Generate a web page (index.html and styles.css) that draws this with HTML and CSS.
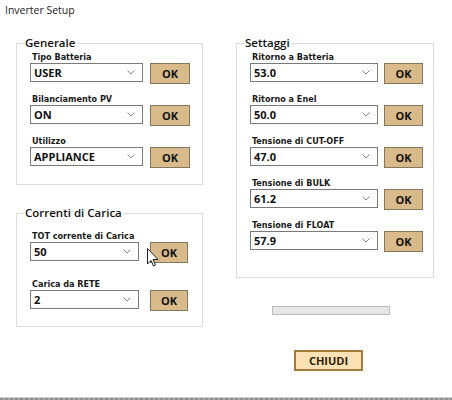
FILE: index.html
```html
<!DOCTYPE html>
<html lang="it">
<head>
<meta charset="utf-8">
<title>Inverter Setup</title>
<link rel="stylesheet" href="styles.css">
</head>
<body>
<div class="window">
  <div class="title">Inverter Setup</div>
  <div class="columns">
    <div class="col col-left">
      <fieldset class="group generale">
        <legend>Generale</legend>
        <div class="field">
          <label>Tipo Batteria</label>
          <div class="row"><div class="select"><span>USER</span><svg class="chev" viewBox="0 0 8 5"><path d="M0.5 0.5 L4 4 L7.5 0.5"/></svg></div><button class="ok">OK</button></div>
        </div>
        <div class="field">
          <label>Bilanciamento PV</label>
          <div class="row"><div class="select"><span>ON</span><svg class="chev" viewBox="0 0 8 5"><path d="M0.5 0.5 L4 4 L7.5 0.5"/></svg></div><button class="ok">OK</button></div>
        </div>
        <div class="field">
          <label>Utilizzo</label>
          <div class="row"><div class="select"><span>APPLIANCE</span><svg class="chev" viewBox="0 0 8 5"><path d="M0.5 0.5 L4 4 L7.5 0.5"/></svg></div><button class="ok">OK</button></div>
        </div>
      </fieldset>
      <fieldset class="group correnti">
        <legend>Correnti di Carica</legend>
        <div class="field">
          <label>TOT corrente di Carica</label>
          <div class="row"><div class="select"><span>50</span><svg class="chev" viewBox="0 0 8 5"><path d="M0.5 0.5 L4 4 L7.5 0.5"/></svg></div><button class="ok">OK</button></div>
        </div>
        <div class="field">
          <label>Carica da RETE</label>
          <div class="row"><div class="select"><span>2</span><svg class="chev" viewBox="0 0 8 5"><path d="M0.5 0.5 L4 4 L7.5 0.5"/></svg></div><button class="ok">OK</button></div>
        </div>
      </fieldset>
    </div>
    <div class="col col-right">
      <fieldset class="group settaggi">
        <legend>Settaggi</legend>
        <div class="field">
          <label>Ritorno a Batteria</label>
          <div class="row"><div class="select"><span>53.0</span><svg class="chev" viewBox="0 0 8 5"><path d="M0.5 0.5 L4 4 L7.5 0.5"/></svg></div><button class="ok">OK</button></div>
        </div>
        <div class="field">
          <label>Ritorno a Enel</label>
          <div class="row"><div class="select"><span>50.0</span><svg class="chev" viewBox="0 0 8 5"><path d="M0.5 0.5 L4 4 L7.5 0.5"/></svg></div><button class="ok">OK</button></div>
        </div>
        <div class="field">
          <label>Tensione di CUT-OFF</label>
          <div class="row"><div class="select"><span>47.0</span><svg class="chev" viewBox="0 0 8 5"><path d="M0.5 0.5 L4 4 L7.5 0.5"/></svg></div><button class="ok">OK</button></div>
        </div>
        <div class="field">
          <label>Tensione di BULK</label>
          <div class="row"><div class="select"><span>61.2</span><svg class="chev" viewBox="0 0 8 5"><path d="M0.5 0.5 L4 4 L7.5 0.5"/></svg></div><button class="ok">OK</button></div>
        </div>
        <div class="field">
          <label>Tensione di FLOAT</label>
          <div class="row"><div class="select"><span>57.9</span><svg class="chev" viewBox="0 0 8 5"><path d="M0.5 0.5 L4 4 L7.5 0.5"/></svg></div><button class="ok">OK</button></div>
        </div>
      </fieldset>
      <div class="progress"></div>
      <button class="close">CHIUDI</button>
    </div>
  </div>
  <div class="taskbar"></div>
  <svg class="cursor" viewBox="0 0 12 19" width="12" height="19"><path d="M0.5 0.5 L0.5 16 L4 12.5 L6.5 18 L8.5 17 L6 11.5 L11 11.5 Z"/></svg>
</div>
</body>
</html>
```
FILE: styles.css
```css
* { box-sizing: border-box; }
html, body { margin: 0; padding: 0; background: #fff; }
body { width: 452px; height: 400px; overflow: hidden; }

.window {
  position: relative;
  height: 400px;
  display: flex;
  flex-direction: column;
  font-family: "Open Sans", "Noto Sans", sans-serif;
  color: #111;
}

.title {
  font-size: 10.5px;
  line-height: 16px;
  padding: 2px 0 0 5px;
  color: #222;
}

.columns {
  display: flex;
  gap: 33px;
  padding: 17px 0 0 16px;
}

.col { display: flex; flex-direction: column; }
.col-left { width: 187px; }
.col-right { width: 198px; }

.group {
  margin: 0;
  min-width: 0;
  border: 1px solid #dcdcdc;
  padding: 0 0 0 13px;
}
.group legend {
  font-size: 11.5px;
  font-weight: 600;
  line-height: 16px;
  padding: 0 1px;
  margin-left: -6px;
  color: #111;
}

.generale { padding-bottom: 16px; }
.correnti { margin-top: 20px; padding-top: 9px; padding-bottom: 15px; }
.correnti .field + .field { margin-top: 15px; }
.settaggi { padding-left: 13px; padding-bottom: 25px; }

.field + .field { margin-top: 9px; }
.field label {
  display: block;
  font-family: "DejaVu Sans Condensed", "DejaVu Sans", sans-serif;
  font-weight: bold;
  font-size: 9px;
  line-height: 12px;
  padding-left: 2px;
  color: #1a1a1a;
}

.row { display: flex; align-items: flex-start; height: 21px; }

.select {
  width: 113px;
  height: 19px;
  border: 1px solid #7a7a7a;
  background: #fff;
  display: flex;
  align-items: center;
  justify-content: space-between;
  padding: 0 7px 0 3px;
}
.select span {
  font-weight: 700;
  font-size: 11px;
  line-height: 17px;
  color: #111;
}
.chev { width: 8px; height: 5px; fill: none; stroke: #888; stroke-width: 1; }

.correnti .select { width: 109px; }
.settaggi .select { width: 128px; }

.ok {
  margin-left: 7px;
  width: 40px;
  height: 21px;
  background: #d9ba8b;
  border: 1px solid #85765e;
  font-family: "Open Sans", "Noto Sans", sans-serif;
  font-weight: 700;
  font-size: 11px;
  color: #111;
  padding: 0;
  line-height: 19px;
}
.correnti .ok { margin-left: 11px; width: 38px; }
.settaggi .ok { margin-left: 6px; width: 39px; }

.progress {
  margin: 28px 0 0 36px;
  width: 118px;
  height: 9px;
  background: #e6e6e6;
  border: 1px solid #bdbdbd;
}

.close {
  margin: 35px 0 0 58px;
  width: 69px;
  height: 21px;
  background: #fbe1b3;
  border: 2px solid #a27b3a;
  font-family: "Open Sans", "Noto Sans", sans-serif;
  font-weight: 700;
  font-size: 11px;
  color: #2a1e10;
  padding: 0;
  line-height: 17px;
}

.taskbar {
  margin-top: auto;
  height: 3px;
  background: repeating-linear-gradient(90deg, #8e8e8e 0 3px, #a8a8a8 3px 5px);
  border-top: 1px solid #cfcfcf;
}

.cursor {
  position: absolute;
  left: 147px;
  top: 248px;
  fill: #fff;
  stroke: #222;
  stroke-width: 1;
}
```
